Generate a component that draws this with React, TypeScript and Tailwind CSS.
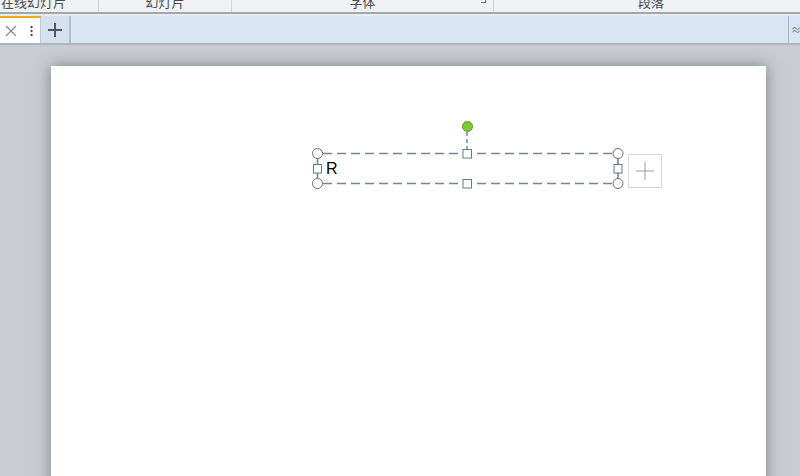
import React from 'react';

const groups = [
  { label: '在线幻灯片', width: 99, launcher: false, first: true },
  { label: '幻灯片', width: 133, launcher: false, first: false },
  { label: '字体', width: 262, launcher: true, first: false },
  { label: '段落', width: 314, launcher: false, first: false },
];

const RibbonLabels: React.FC = () => (
  <div className="flex h-[14px] shrink-0 overflow-hidden bg-[#f1f2f3] border-b-2 border-[#a3a6aa]">
    {groups.map((g, i) => (
      <div
        key={g.label}
        style={{ width: g.width }}
        className={`relative flex shrink-0 ${g.first ? 'justify-start pl-[1px]' : 'justify-center'} ${i < groups.length - 1 ? 'border-r border-[#d3d5d8]' : ''}`}
      >
        <span className="-mt-[6px] text-[13px] leading-[16px] text-[#4b4b4b]">{g.label}</span>
        {g.launcher && (
          <span className="absolute right-[7px] top-[-1px] h-[4px] w-[5px] border-r border-b border-[#777]" />
        )}
      </div>
    ))}
  </div>
);

const TabBar: React.FC = () => (
  <div className="flex h-[31px] shrink-0 bg-[#e9ecef] pt-[2px]">
    <div className="flex flex-1 bg-[#d8e5f4] border-b-2 border-[#a9b5c4]">
      <div className="flex w-[41px] items-center gap-[13px] bg-white border-t-2 border-[#f0a81e] border-r border-r-[#c2ccd8] pl-[5px]">
        <svg width="12" height="12" viewBox="0 0 12 12">
          <path d="M1 1L11 11M11 1L1 11" stroke="#8a8a8a" strokeWidth="1.2" />
        </svg>
        <svg width="3" height="12" viewBox="0 0 3 12">
          <circle cx="1.5" cy="2" r="1.2" fill="#555" />
          <circle cx="1.5" cy="6" r="1.2" fill="#555" />
          <circle cx="1.5" cy="10" r="1.2" fill="#555" />
        </svg>
      </div>
      <div className="flex w-[30px] items-center justify-center bg-[#d5e1f0] border-r-2 border-[#b3bfcd]">
        <svg width="14" height="14" viewBox="0 0 14 14">
          <path d="M7 0V14M0 7H14" stroke="#4d5667" strokeWidth="2" />
        </svg>
      </div>
      <div className="flex-1" />
      <div className="flex w-[12px] items-center border-l border-[#a9b5c4] pl-[2px] text-[10px] leading-none text-[#777]">
        ≈
      </div>
    </div>
  </div>
);

const SelectionBox: React.FC = () => (
  <>
    <svg
      className="absolute left-0 top-0"
      width="715"
      height="200"
      viewBox="51 66 715 200"
    >
      <g stroke="#6f86a1" strokeWidth="1.6" strokeDasharray="9 5" fill="none">
        <line x1="323" y1="153.5" x2="613" y2="153.5" />
        <line x1="323" y1="183.5" x2="613" y2="183.5" />
        <line x1="317.5" y1="158" x2="317.5" y2="179" />
        <line x1="618" y1="158" x2="618" y2="179" />
      </g>
      <line x1="467" y1="132" x2="467" y2="149" stroke="#6f86a1" strokeWidth="1.5" strokeDasharray="4 3" />
      <g fill="#fff" stroke="#6d6d6d" strokeWidth="1">
        <circle cx="317.5" cy="153.5" r="5" />
        <circle cx="618" cy="153.5" r="5" />
        <circle cx="317.5" cy="183.5" r="5" />
        <circle cx="618" cy="183.5" r="5" />
      </g>
      <g fill="#fff" stroke="#5b7a98" strokeWidth="1">
        <rect x="463" y="149.5" width="8.5" height="8.5" />
        <rect x="463" y="179.5" width="8.5" height="8.5" />
        <rect x="313.5" y="164.5" width="8" height="8.5" />
        <rect x="614" y="164.5" width="8" height="8.5" />
      </g>
      <circle cx="467.5" cy="126.5" r="5" fill="#7fca34" stroke="#5e9b25" strokeWidth="1" />
    </svg>
    <span
      className="absolute left-[275px] top-[95px] text-[16px] leading-[16px] text-black"
      style={{ fontFamily: '"Liberation Sans", Arial, sans-serif' }}
    >
      R
    </span>
    <div className="absolute left-[577px] top-[88px] flex h-[34px] w-[34px] items-center justify-center border border-[#d6d6d6] bg-white">
      <svg width="18" height="18" viewBox="0 0 18 18">
        <path d="M9 0V18M0 9H18" stroke="#9b9b9b" strokeWidth="1" />
      </svg>
    </div>
  </>
);

export default function App() {
  return (
    <div
      className="flex h-[476px] w-[800px] flex-col overflow-hidden bg-[#c9cdd2]"
      style={{ fontFamily: '"Noto Sans CJK SC", "Liberation Sans", sans-serif' }}
    >
      <RibbonLabels />
      <TabBar />
      <div className="min-h-0 flex-1 pl-[51px] pt-[21px]">
        <div className="relative h-[500px] w-[715px] bg-white shadow-[0_0_14px_rgba(60,65,72,0.55)]">
          <SelectionBox />
        </div>
      </div>
    </div>
  );
}
